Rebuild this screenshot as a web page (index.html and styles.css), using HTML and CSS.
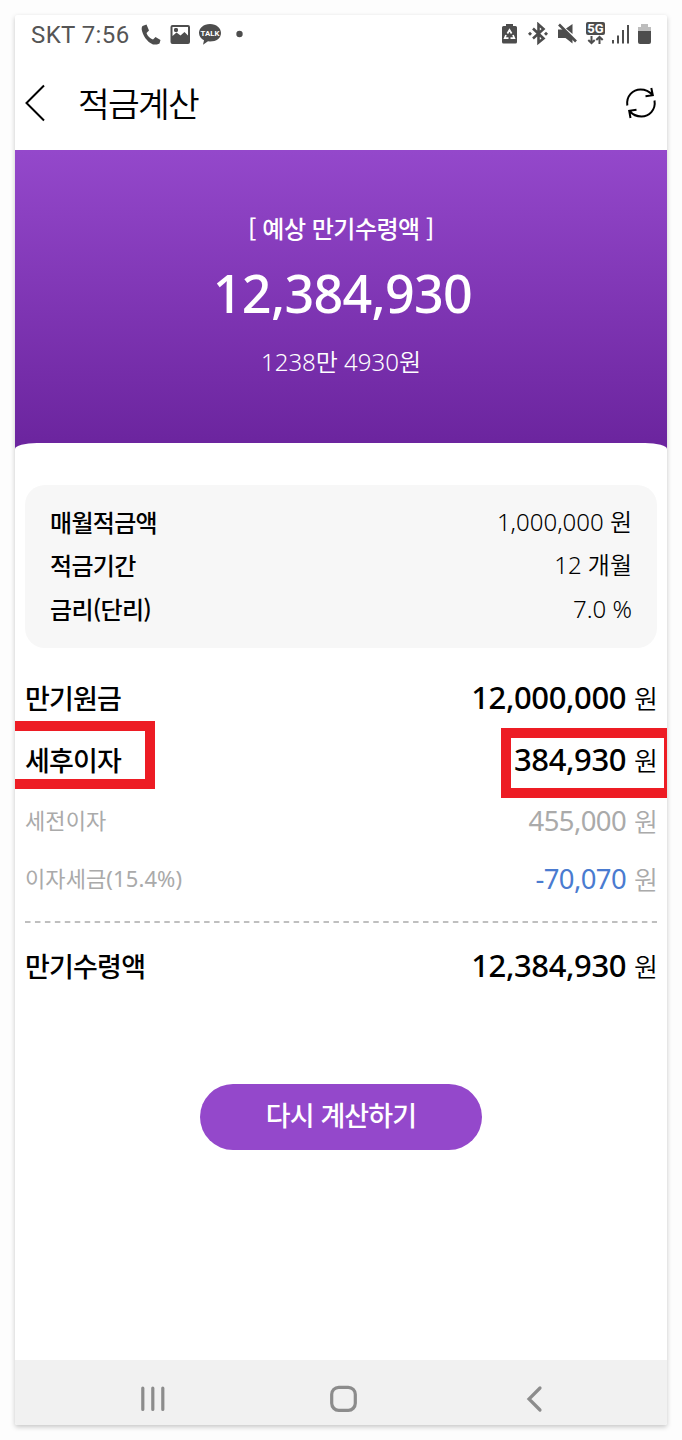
FILE: index.html
```html
<!DOCTYPE html>
<html lang="ko">
<head>
<meta charset="utf-8">
<title>적금계산</title>
<link rel="stylesheet" href="styles.css">
</head>
<body>
<main class="phone">
  <div class="status">
    <span class="clock">SKT 7:56</span>
    <svg class="status-left" width="104" height="30" viewBox="0 0 104 30" fill="#4d4d4d">
      <path d="M2.500 6l4-1.500 2.500 6-2.500 2.500c1 3 3.500 5.500 6.500 6.500l2.500-2.500 5 3-1 3.500c-1 1-4 1-6.500 1C7 22 2.500 15 1.700 9.500c0-1.500 0-2.500.8-3.500z"/>
      <path fill-rule="evenodd" d="M32.500 5h15.500a2 2 0 0 1 2 2v15a2 2 0 0 1-2 2H32.500a2 2 0 0 1-2-2V7a2 2 0 0 1 2-2zm0 2v9l4-3.500 4 3 4-3.500 3.500 3.500V7zM34 10a2 2 0 1 0 4 0 2 2 0 0 0-4 0z"/>
      <circle cx="36" cy="10" r="2"/>
      <path d="M70 4c6.500 0 11 4 11 9s-4.500 8.500-11 8.500l-2-.200-5 3.500 1-4.500c-3-1.700-5-4.200-5-7.300 0-5 4.500-9 11-9z"/>
      <text class="talk" x="70" y="15.700" text-anchor="middle">TALK</text>
      <circle cx="99.500" cy="14" r="3.200"/>
    </svg>
    <svg class="status-right" width="152" height="28" viewBox="0 0 152 28" fill="#4d4d4d">
      <path d="M1 5.500A1.500 1.500 0 0 1 2.500 4H5V2h7v2h2.500A1.500 1.500 0 0 1 16 5.500V20a1.500 1.500 0 0 1-1.500 1.500h-12A1.500 1.500 0 0 1 1 20z"/>
      <path d="M6.400 11.500l2.100-3.500 2.100 3.500M12 13l1.300 3.200H9.500M7.500 16.200H3.700L5 13" fill="none" stroke="#fff" stroke-width="1.700"/>
      <path d="M32 6.500l10.500 10L37.500 20.500V2.500l5 4.500L32 16.500" fill="none" stroke="#4d4d4d" stroke-width="2.600"/>
      <path d="M29 9.700l2 2-2 2-2-2zM45 9.700l2 2-2 2-2-2z"/>
      <path d="M57 7.500h6l8.500 8.500v5.500l-7-5.500H57zM65 6.500l6.500-4.500v10z"/>
      <path d="M58 2.500l17 17" stroke="#4d4d4d" stroke-width="2.600"/>
      <rect x="85" y="0" width="19" height="13" rx="2"/>
      <text class="network" x="94.500" y="11.200" text-anchor="middle">5G</text>
      <path d="M90.500 14v7M87.300 18l3.200 3.200 3.200-3.200M98.500 22v-7M95.300 18l3.200-3.200 3.200 3.200" fill="none" stroke="#4d4d4d" stroke-width="2"/>
      <path d="M111 18h2v3.500h-2zM116 13.500h2v8h-2zM121 8h2v13.500h-2zM126 3h2v18.500h-2z"/>
      <path d="M137 9V5h3V2h7v3h3v4z" fill="#bdbdbd"/>
      <path d="M137 9h13v11a2 2 0 0 1-2 2h-9a2 2 0 0 1-2-2z"/>
    </svg>
  </div>
  <header class="header">
    <svg width="24" height="40" viewBox="0 0 24 40" fill="none" stroke="#000" stroke-width="2"><path d="M20 2.500L2.500 20 20 37.500"/></svg>
    <h1 class="title">적금계산</h1>
    <svg class="refresh" width="32" height="32" viewBox="0 0 32 32" fill="none" stroke="#000" stroke-width="2"><path d="M2.300 18.500C1 9 8 2.500 15.500 2.500c5 0 9 2 12 5.500M29.500 13.500C31 23 24 29.500 16.500 29.500c-5 0-9-2-12-5.500M26.300 1l1.500 7.200-7.300 1M5.500 31l-1.300-7.200 7.300-1"/></svg>
  </header>
  <section class="hero">
    <p class="hero-label">[ 예상 만기수령액 ]</p>
    <p class="hero-amount">12,384,930</p>
    <p class="hero-korean">1238만 4930원</p>
  </section>
  <section class="content">
    <dl class="summary">
      <div class="summary-row"><dt>매월적금액</dt><dd>1,000,000 원</dd></div>
      <div class="summary-row"><dt>적금기간</dt><dd>12 개월</dd></div>
      <div class="summary-row"><dt>금리(단리)</dt><dd>7.0 %</dd></div>
    </dl>
    <dl class="result">
      <div class="row"><dt>만기원금</dt><dd><b>12,000,000</b><span>원</span></dd></div>
      <div class="row row-interest"><dt>세후이자</dt><dd><b>384,930</b><span>원</span></dd><i class="mark mark-left"></i><i class="mark mark-right"></i></div>
      <div class="row minor"><dt>세전이자</dt><dd><b>455,000</b><span>원</span></dd></div>
      <div class="row minor tax"><dt>이자세금(15.4%)</dt><dd><b>-70,070</b><span>원</span></dd></div>
    </dl>
    <svg class="divider" width="632" height="2"><path d="M0 1h632" stroke="#aaa" stroke-width="1.700" stroke-dasharray="5.500 4.450"/></svg>
    <dl class="result total">
      <div class="row"><dt>만기수령액</dt><dd><b>12,384,930</b><span>원</span></dd></div>
    </dl>
    <button class="again">다시 계산하기</button>
  </section>
  <nav class="nav">
    <svg width="652" height="65" viewBox="0 0 652 65" fill="none" stroke="#8c8c8c" stroke-width="3.200" stroke-linecap="round"><path d="M127.800 28v21.500M137.800 28v21.500M147.800 28v21.500"/><rect x="316.700" y="27.300" width="23.600" height="23" rx="7"/><path d="M525 28l-11 11 11 11"/></svg>
  </nav>
</main>
</body>
</html>
```

FILE: styles.css
```css
* { box-sizing: border-box; }
body { margin: 0; padding: 15px; background: #fdfdfd; font-family: "Noto Sans CJK KR", sans-serif; color: #000; }
h1, p, dl, dd { margin: 0; }
.phone { width: 652px; height: 1410px; background: #fff; display: flex; flex-direction: column; border-radius: 2px; box-shadow: 0 2px 5px rgba(0,0,0,.22); overflow: hidden; }
.status { height: 54px; display: flex; align-items: flex-start; padding: 5px 14px 0 16px; }
.clock { font: 24px/31px Roboto, sans-serif; color: #555; width: 109px; white-space: nowrap; letter-spacing: .4px; }
.status-right { margin: 2px 0 0 auto; }
.talk { font: 700 7.8px Roboto, sans-serif; fill: #fff; }
.network { font: 700 13px Roboto, sans-serif; fill: #fff; }
.header { height: 81px; display: flex; align-items: flex-start; padding: 14px 10px 0 9px; }
.title { font-weight: 350; font-size: 34.5px; line-height: 38px; letter-spacing: -1.7px; margin: 0 auto 0 30px; }
.refresh { margin-top: 4px; }
.hero { height: 310px; flex: none; background: linear-gradient(#9448cb, #6c259f 290px); color: #fff; text-align: center; padding-top: 60px; }
.hero-label { font-size: 24px; line-height: 36px; font-weight: 500; letter-spacing: -.5px; }
.hero-amount, .hero-korean, .summary dd, .row b, .minor dt { font-family: "Noto Sans", "Noto Sans CJK KR", sans-serif; }
.hero-amount { font-size: 52px; line-height: 70px; font-weight: 500; margin-top: 12px; padding-left: 3px; letter-spacing: -.7px; }
.hero-korean { font-size: 24px; line-height: 36px; font-weight: 350; margin-top: 16px; }
.content { flex: 1; margin-top: -17px; padding: 42px 10px 0; background: #fff; border-radius: 22px 22px 0 0 / 6px 6px 0 0; display: flex; flex-direction: column; }
.summary { height: 163px; padding: 15px 25px; border-radius: 20px; background: #f7f7f7; }
.summary-row { height: 43.500px; display: flex; justify-content: space-between; align-items: center; font-size: 24px; line-height: 36px; }
.summary dt { font-weight: 500; letter-spacing: -.7px; }
.summary dd { font-weight: 350; }
.result { margin-top: 20px; }
.row { display: flex; justify-content: space-between; align-items: center; height: 60px; font-size: 27px; line-height: 40px; position: relative; }
.row dt { font-weight: 500; letter-spacing: -.8px; }
.row dd { display: flex; align-items: center; gap: 8px; }
.row b { font-size: 31px; font-weight: 500; letter-spacing: -.4px; padding-bottom: 2px; }
.row span { font-weight: 350; font-size: 26px; margin-right: -1px; }
.row-interest { height: 64px; }
.mark { position: absolute; border: 10px solid #ed1c24; }
.mark-left { left: -10px; top: -7px; width: 140px; height: 68px; border-left: 0; }
.mark-right { right: -10px; top: 0; width: 166px; height: 70px; border-right-width: 3px; }
.minor { height: 58px; color: #aaa; }
.minor dt { font-size: 22px; font-weight: 400; letter-spacing: .1px; padding-bottom: 2px; }
.minor b { font-size: 27.5px; font-weight: 400; letter-spacing: -.6px; padding-bottom: 0; }
.minor span { padding-bottom: 1px; }
.tax b { color: #4a7bd0; }
.divider { margin-top: 13px; }
.total { margin-top: 13px; }
.again { width: 282px; height: 66px; margin: 88px auto 0; border: 0; border-radius: 33px; background: #9448cb; color: #fff; font: 500 27px/40px "Noto Sans CJK KR", sans-serif; letter-spacing: -.9px; padding: 0 0 4px; }
.nav { height: 65px; flex: none; background: #f1f1f1; }
.nav svg { display: block; }
```
